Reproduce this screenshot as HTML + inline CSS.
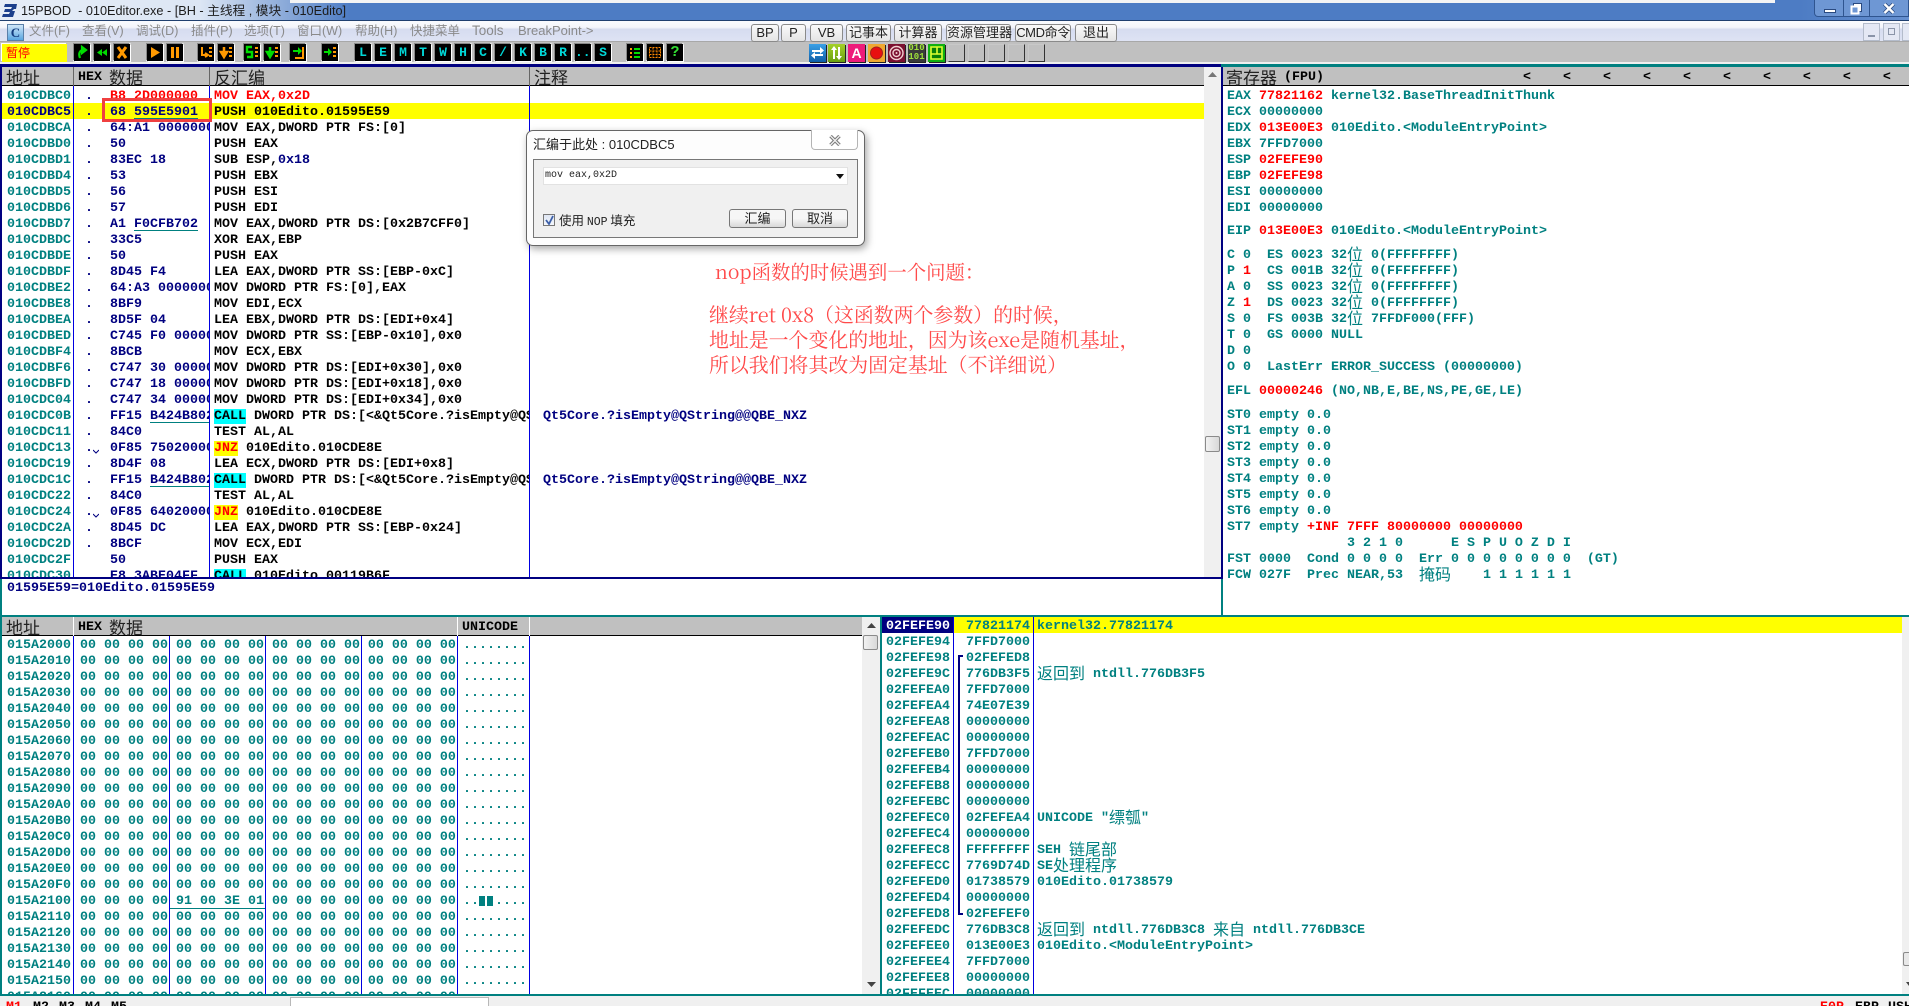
<!DOCTYPE html>
<html><head><meta charset="utf-8"><title>15PBOD</title>
<style>
html,body{margin:0;padding:0}
body{width:1909px;height:1006px;overflow:hidden;background:#f0f0f0;position:relative;font-family:"Liberation Sans","Noto Sans CJK SC",sans-serif}
.a{position:absolute}
.x{position:absolute;overflow:hidden}
pre{position:absolute;margin:0;font:bold 13.33px/16px "Liberation Mono","Noto Sans CJK SC",monospace;white-space:pre}
.t{color:#008080}.n{color:#000080}.k{color:#000}.r{color:#f00}
.c{display:inline-block;width:16px;height:16px;font:normal 16px/16px "Noto Sans CJK SC",sans-serif;text-align:center;vertical-align:top;position:relative;top:-3px}
.u{text-decoration:underline #008080;text-underline-offset:3px}
.call{background:#0ff}.jnz{background:#ff0;color:#f00}
.m{position:absolute;top:22px;font-size:12.5px;line-height:18px;color:#8a8a8a;white-space:nowrap}
.tb{position:absolute;top:24px;height:16px;box-sizing:content-box;border:1px solid #8a8a8a;border-radius:3px;background:linear-gradient(#fafafa,#e4e4e4);font-size:13px;line-height:16px;color:#222;text-align:center;white-space:nowrap}
.b{position:absolute;top:44px;width:16px;height:17px;background:#000;box-shadow:1px 1px 0 #fff,-1px -1px 0 #888,1px -1px 0 #ddd,-1px 1px 0 #ddd;overflow:hidden;color:#00d8d8;font:bold 13px/17px "Liberation Mono",monospace;text-align:center}
.b svg,.s svg{display:block}
.s{position:absolute;top:44px;width:17px;height:18px;box-shadow:1px 1px 0 #222;overflow:hidden}
.e{position:absolute;top:44px;width:17px;height:18px;border:1px solid #333;border-left-color:#c8c8c8;border-top-color:#c8c8c8;box-sizing:border-box}
.h{position:absolute;height:19px;background:#c0c0c0;border-bottom:1px solid #000;box-sizing:border-box}
.hd{position:absolute;font:normal 17px/19px "Noto Sans CJK SC",sans-serif;color:#222;white-space:nowrap}
.hm{position:absolute;font:bold 13.33px/19px "Liberation Mono",monospace;color:#000;white-space:nowrap}
.v{position:absolute;width:1px;background:#0000e0}
.red{position:absolute;font:normal 19.9px/24px "Noto Serif CJK SC",serif;color:#ff4a4a;white-space:nowrap}
</style></head><body>

<!-- title bar -->
<div class="a" style="left:0;top:0;width:1909px;height:21px;background:linear-gradient(90deg,#e6edf7 0,#dce6f4 200px,#4d7cc4 350px,#4d7cc4 1800px,#6690d0 1909px)"></div>
<div class="a" style="left:290px;top:0;width:1485px;height:3px;background:#f4f4f4"></div>
<svg class="a" style="left:1px;top:3px" width="17" height="15" viewBox="0 0 17 15"><path d="M4 1H16L15 6H13L11 8H14L12 14H1L2 11H8L9 9H3L4 6H10L11 4H3z" fill="#1c3f8c"/></svg>
<div class="a" style="left:21px;top:3px;font-size:12.7px;line-height:17px;color:#1c1c1c;white-space:nowrap">15PBOD &nbsp;- 010Editor.exe - [BH - 主线程 , 模块 - 010Edito]</div>
<div class="a" style="left:1814px;top:0;width:95px;height:17px;background:#6e97d4;border:1px solid #2f5590;border-top:0;border-radius:0 0 0 4px;box-sizing:border-box"></div>
<div class="a" style="left:1843px;top:0;width:1px;height:17px;background:#2f5590"></div>
<div class="a" style="left:1869px;top:0;width:1px;height:17px;background:#2f5590"></div>
<div class="a" style="left:1824px;top:9px;width:10px;height:2px;background:#fff;border:1px solid #2a4a80"></div>
<svg class="a" style="left:1850px;top:3px" width="13" height="12" viewBox="0 0 13 12"><rect x="3.5" y=".5" width="8" height="8" fill="#fff" stroke="#2a4a80"/><rect x="1.5" y="3.5" width="7" height="7" fill="#6e97d4" stroke="#fff" stroke-width="2"/></svg>
<svg class="a" style="left:1883px;top:3px" width="12" height="11" viewBox="0 0 12 11"><path d="M1.5 1L10.5 10M10.5 1L1.5 10" stroke="#2a4a80" stroke-width="4"/><path d="M1.5 1L10.5 10M10.5 1L1.5 10" stroke="#fff" stroke-width="2.4"/></svg>
<div class="a" style="left:0;top:20px;width:1909px;height:1px;background:#20406f"></div>

<!-- menu bar -->
<div class="a" style="left:0;top:21px;width:1909px;height:21px;background:linear-gradient(#fafbfe 0,#f4f6fb 30%,#d6dcf0 40%,#dfe4f4 100%)"></div>
<div class="a" style="left:0;top:41px;width:1909px;height:1px;background:#a8a8a8"></div>
<div class="a" style="left:7px;top:24px;width:15px;height:15px;background:linear-gradient(#cfe6f8,#5aa6e0);border:1px solid #5a7fa8;font:bold 13px/15px 'Liberation Serif',serif;color:#123a7c;text-align:center">C</div>
<div class="m" style="left:29px">文件(F)</div><div class="m" style="left:82px">查看(V)</div><div class="m" style="left:136px">调试(D)</div><div class="m" style="left:191px">插件(P)</div><div class="m" style="left:244px">选项(T)</div><div class="m" style="left:297px">窗口(W)</div><div class="m" style="left:355px">帮助(H)</div><div class="m" style="left:410px">快捷菜单</div><div class="m" style="left:472px;font-size:13.5px">Tools</div><div class="m" style="left:518px;font-size:13px">BreakPoint-&gt;</div>
<div class="tb" style="left:751px;width:26px">BP</div><div class="tb" style="left:781px;width:23px">P</div><div class="tb" style="left:810px;width:31px">VB</div><div class="tb" style="left:846px;width:43px">记事本</div><div class="tb" style="left:894px;width:46px">计算器</div><div class="tb" style="left:946px;width:63px">资源管理器</div><div class="tb" style="left:1015px;width:54px;letter-spacing:-.4px">CMD命令</div><div class="tb" style="left:1075px;width:40px">退出</div>
<div class="a" style="left:1863px;top:23px;width:17px;height:18px;border:1px solid #b4bccb;box-sizing:border-box;background:#e4e8f4"></div><div class="a" style="left:1868px;top:35px;width:7px;height:2px;background:#8a94a8"></div>
<div class="a" style="left:1883px;top:23px;width:17px;height:18px;border:1px solid #b4bccb;box-sizing:border-box;background:#e4e8f4"></div><div class="a" style="left:1888px;top:28px;width:7px;height:7px;border:1px solid #8a94a8;box-sizing:border-box"></div>
<div class="a" style="left:1902px;top:23px;width:7px;height:18px;border:1px solid #b4bccb;border-right:0;box-sizing:border-box;background:#e4e8f4"></div>

<!-- toolbar -->
<div class="a" style="left:0;top:42px;width:1909px;height:22px;background:#c0c0c0"></div>
<div class="a" style="left:0;top:62px;width:1909px;height:2px;background:#efefef"></div>
<div class="a" style="left:2px;top:44px;width:65px;height:18px;background:#ff0;font:12px/18px 'Noto Sans CJK SC',sans-serif;color:#f00;text-indent:4px;box-shadow:-1px -1px 0 #fff">暂停</div>

<div class="b" style="left:74px"><svg width="16" height="17" viewBox="0 0 16 17"><path d="M6 14C4 9 6 6 10 6M8 3L12 6L8 9z" fill="none" stroke="#0d0" stroke-width="2.2"/></svg></div>
<div class="b" style="left:94px"><svg width="16" height="17" viewBox="0 0 16 17"><path d="M8 5L3 8.5L8 12zM13 5L8 8.5L13 12z" fill="#0d0"/></svg></div>
<div class="b" style="left:114px"><svg width="16" height="17" viewBox="0 0 16 17"><path d="M4 3L12 14M12 3L4 14" stroke="#f90" stroke-width="3"/></svg></div>
<div class="b" style="left:147px"><svg width="16" height="17" viewBox="0 0 16 17"><path d="M4 3L13 8.5L4 14z" fill="#f90"/></svg></div>
<div class="b" style="left:167px"><svg width="16" height="17" viewBox="0 0 16 17"><path d="M4 3h3v11H4zM9 3h3v11H9z" fill="#f90"/></svg></div>
<div class="b" style="left:198px"><svg width="16" height="17" viewBox="0 0 16 17"><path d="M4 3v8h5M7 9L10 11L7 13" stroke="#f90" stroke-width="2" fill="none"/><path d="M11 3h3v2h-3zM11 7h3v2h-3zM11 11h3v2h-3z" fill="#f90"/></svg></div>
<div class="b" style="left:218px"><svg width="16" height="17" viewBox="0 0 16 17"><path d="M6 3v7M3 8L6 13L9 8z" stroke="#f90" stroke-width="2.5" fill="#f90"/><path d="M11 3h3v2h-3zM11 7h3v2h-3zM11 11h3v2h-3z" fill="#f90"/></svg></div>
<div class="b" style="left:244px"><svg width="16" height="17" viewBox="0 0 16 17"><path d="M8 3H3V8H8V13H3" stroke="#0d0" stroke-width="2.4" fill="none"/><path d="M11 3h3v2h-3zM11 7h3v2h-3zM11 11h3v2h-3z" fill="#f90"/></svg></div>
<div class="b" style="left:264px"><svg width="16" height="17" viewBox="0 0 16 17"><path d="M6 3v7M3 8L6 13L9 8z" stroke="#0d0" stroke-width="2.5" fill="#0d0"/><path d="M11 3h3v2h-3zM11 7h3v2h-3zM11 11h3v2h-3z" fill="#f90"/></svg></div>
<div class="b" style="left:290px"><svg width="16" height="17" viewBox="0 0 16 17"><path d="M3 6H8V3L12 7L8 11V8H3z" fill="#0d0"/><path d="M13 3V14H5" stroke="#f90" stroke-width="2" fill="none"/></svg></div>
<div class="b" style="left:322px"><svg width="16" height="17" viewBox="0 0 16 17"><path d="M2 7H6V4L10 8L6 12V9H2z" fill="#0d0"/><path d="M11 3h3v2h-3zM11 7h3v2h-3zM11 11h3v2h-3z" fill="#f90"/></svg></div>
<div class="b" style="left:355px">L</div><div class="b" style="left:375px">E</div><div class="b" style="left:395px">M</div><div class="b" style="left:415px">T</div><div class="b" style="left:435px">W</div><div class="b" style="left:455px">H</div><div class="b" style="left:475px">C</div><div class="b" style="left:495px">/</div><div class="b" style="left:515px">K</div><div class="b" style="left:535px">B</div><div class="b" style="left:555px">R</div><div class="b" style="left:575px">...</div><div class="b" style="left:595px">S</div>
<div class="b" style="left:627px"><svg width="16" height="17" viewBox="0 0 16 17"><path d="M3 4h2v2H3zM3 8h2v2H3zM3 12h2v2H3z" fill="#f90"/><path d="M7 4h6v2H7zM7 8h6v2H7zM7 12h6v2H7z" fill="#0d0"/></svg></div>
<div class="b" style="left:647px"><svg width="16" height="17" viewBox="0 0 16 17"><path d="M2.5 3.5h11v10h-11zM6 3.5v10M10 3.5v10M2.5 7h11M2.5 10.500h11" stroke="#f80" stroke-dasharray="2 1" fill="none"/></svg></div>
<div class="b" style="left:667px;color:#3d3;font-size:15px">?</div>

<div class="s" style="left:809px;background:linear-gradient(#3aa0e6,#0f5fa8)"><svg width="17" height="18" viewBox="0 0 17 18"><path d="M3 6H11V3L15 6.500L11 10V8H3zM14 10H6V8L2 11.500L6 15V12H14z" fill="#fff"/></svg></div>
<div class="s" style="left:828px;background:linear-gradient(#a4d028,#6aa010)"><svg width="17" height="18" viewBox="0 0 17 18"><path d="M5 15V6H3L6 2L9 6H7V15zM10 3V12H8L11 16L14 12H12V3z" fill="#fff"/></svg></div>
<div class="s" style="left:848px;background:#ee1b7a;color:#fff;font:bold 14px/18px 'Liberation Sans',sans-serif;text-align:center">A</div>
<div class="s" style="left:868px;background:#f0a830"><svg width="17" height="18" viewBox="0 0 17 18"><circle cx="8.500" cy="9" r="6" fill="#e81010" stroke="#a02020"/></svg></div>
<div class="s" style="left:888px;background:#7c1030"><svg width="17" height="18" viewBox="0 0 17 18"><circle cx="8.500" cy="9" r="6.500" fill="none" stroke="#f0d0d0" stroke-width="1.400"/><circle cx="8.500" cy="9" r="3.500" fill="none" stroke="#f0d0d0" stroke-width="1.400"/><circle cx="8.500" cy="9" r="1" fill="#f0d0d0"/></svg></div>
<div class="s" style="left:908px;background:#3a3a3a;color:#9ee03a;font:bold 9px/9px 'Liberation Mono',monospace;text-align:center">010<br>101</div>
<div class="s" style="left:928px;background:#10b010"><svg width="17" height="18" viewBox="0 0 17 18"><path d="M3 3h11v12H3zM9 3v7M3 10h11" stroke="#dfff30" stroke-width="1.600" fill="#088008"/></svg></div>
<div class="e" style="left:948px"></div><div class="e" style="left:968px"></div><div class="e" style="left:988px"></div><div class="e" style="left:1008px"></div><div class="e" style="left:1028px"></div>

<!-- client background -->
<div class="a" style="left:0;top:64px;width:1221px;height:3px;background:#000080"></div>
<div class="a" style="left:1221px;top:64px;width:688px;height:3px;background:#008080"></div>
<div class="a" style="left:0;top:67px;width:1909px;height:929px;background:#fff"></div>

<!-- CPU pane -->
<div class="a" style="left:2px;top:103px;width:1202px;height:16px;background:#ff0"></div>
<div class="h" style="left:0;top:67px;width:1204px"></div>
<div class="a" style="left:73px;top:67px;width:1px;height:19px;background:#666"></div>
<div class="a" style="left:209px;top:67px;width:1px;height:19px;background:#666"></div>
<div class="a" style="left:529px;top:67px;width:1px;height:19px;background:#666"></div>
<div class="hd" style="left:6px;top:67px">地址</div>
<div class="hm" style="left:78px;top:68px">HEX</div><div class="hd" style="left:109px;top:67px">数据</div>
<div class="hd" style="left:214px;top:67px">反汇编</div>
<div class="hd" style="left:534px;top:67px">注释</div>
<div class="v" style="left:73px;top:86px;height:491px"></div>
<div class="v" style="left:209px;top:86px;height:491px"></div>
<div class="v" style="left:529px;top:86px;height:491px"></div>

<div class="x" style="left:7px;top:87px;width:66px;height:490px"><pre class="t" style="left:0;top:2px">010CDBC0
<span class="n">010CDBC5</span>
010CDBCA
010CDBD0
010CDBD1
010CDBD4
010CDBD5
010CDBD6
010CDBD7
010CDBDC
010CDBDE
010CDBDF
010CDBE2
010CDBE8
010CDBEA
010CDBED
010CDBF4
010CDBF6
010CDBFD
010CDC04
010CDC0B
010CDC11
010CDC13
010CDC19
010CDC1C
010CDC22
010CDC24
010CDC2A
010CDC2D
010CDC2F
010CDC30</pre></div>
<pre class="n" style="left:85px;top:89px">
.
.
.
.
.
.
.
.
.
.
.
.
.
.
.
.
.
.
.
.
.
.
.
.
.
.
.
.
.</pre>
<svg class="a" style="left:93px;top:449px" width="6" height="5"><path d="M0 1L3 4L6 1" stroke="#000080" fill="none"/></svg>
<svg class="a" style="left:93px;top:513px" width="6" height="5"><path d="M0 1L3 4L6 1" stroke="#000080" fill="none"/></svg>
<div class="x" style="left:110px;top:87px;width:99px;height:490px"><pre class="n" style="left:0;top:2px"><span class="r">B8 2D000000</span>
68 <span class="u">595E5901</span>
64:A1 00000000
50
83EC 18
53
56
57
A1 <span class="u">F0CFB702</span>
33C5
50
8D45 F4
64:A3 00000000
8BF9
8D5F 04
C745 F0 00000000
8BCB
C747 30 00000000
C747 18 00000000
C747 34 00000000
FF15 <span class="u">B424B802</span>
84C0
0F85 75020000
8D4F 08
FF15 <span class="u">B424B802</span>
84C0
0F85 64020000
8D45 DC
8BCF
50
E8 3ABE04FF</pre></div>
<div class="x" style="left:214px;top:87px;width:315px;height:490px"><pre class="k" style="left:0;top:2px"><span class="r">MOV EAX,0x2D</span>
PUSH 010Edito.01595E59
MOV EAX,DWORD PTR FS:[0]
PUSH EAX
SUB ESP,<span class="n">0x18</span>
PUSH EBX
PUSH ESI
PUSH EDI
MOV EAX,DWORD PTR DS:[0x2B7CFF0]
XOR EAX,EBP
PUSH EAX
LEA EAX,DWORD PTR SS:[EBP-0xC]
MOV DWORD PTR FS:[0],EAX
MOV EDI,ECX
LEA EBX,DWORD PTR DS:[EDI+0x4]
MOV DWORD PTR SS:[EBP-0x10],0x0
MOV ECX,EBX
MOV DWORD PTR DS:[EDI+0x30],0x0
MOV DWORD PTR DS:[EDI+0x18],0x0
MOV DWORD PTR DS:[EDI+0x34],0x0
<span class="call">CALL</span> DWORD PTR DS:[&lt;&amp;Qt5Core.?isEmpty@QString@@QBE_NXZ&gt;]
TEST AL,AL
<span class="jnz">JNZ</span> 010Edito.010CDE8E
LEA ECX,DWORD PTR DS:[EDI+0x8]
<span class="call">CALL</span> DWORD PTR DS:[&lt;&amp;Qt5Core.?isEmpty@QString@@QBE_NXZ&gt;]
TEST AL,AL
<span class="jnz">JNZ</span> 010Edito.010CDE8E
LEA EAX,DWORD PTR SS:[EBP-0x24]
MOV ECX,EDI
PUSH EAX
<span class="call">CALL</span> 010Edito.00119B6F</pre></div>
<pre class="n" style="left:543px;top:409px">Qt5Core.?isEmpty@QString@@QBE_NXZ</pre>
<pre class="n" style="left:543px;top:473px">Qt5Core.?isEmpty@QString@@QBE_NXZ</pre>

<!-- red box -->
<div class="a" style="left:102px;top:98px;width:110px;height:24px;border:3px solid #f04040;box-sizing:border-box"></div>

<!-- CPU scrollbar -->
<div class="a" style="left:1204px;top:67px;width:17px;height:510px;background:#f0f0f0"></div>
<svg class="a" style="left:1208px;top:72px" width="9" height="6"><path d="M4.500 0L9 5H0z" fill="#777"/></svg>
<div class="a" style="left:1205px;top:436px;width:15px;height:16px;background:linear-gradient(90deg,#f2f2f2,#d8d8d8);border:1px solid #8a8a8a;border-radius:2px;box-sizing:border-box"></div>

<!-- separators -->
<div class="a" style="left:0;top:67px;width:2px;height:512px;background:#000080"></div>
<div class="a" style="left:0;top:577px;width:1221px;height:2px;background:#000080"></div>
<div class="a" style="left:0;top:579px;width:2px;height:417px;background:#008080"></div>
<div class="a" style="left:1221px;top:67px;width:2px;height:512px;background:#000080"></div>
<div class="a" style="left:1221px;top:579px;width:2px;height:36px;background:#008080"></div>
<div class="a" style="left:0;top:615px;width:1909px;height:2px;background:#008080"></div>

<!-- info line -->
<pre class="n" style="left:7px;top:581px">01595E59=010Edito.01595E59</pre>

<!-- register pane -->
<div class="h" style="left:1223px;top:67px;width:686px"></div>
<div class="hd" style="left:1226px;top:67px">寄存器</div>
<div class="hm" style="left:1284px;top:68px">(FPU)</div>
<pre class="k" style="left:1523px;top:68px;line-height:19px;letter-spacing:0">&lt;    &lt;    &lt;    &lt;    &lt;    &lt;    &lt;    &lt;    &lt;    &lt;</pre>
<pre class="t" style="left:1227px;top:89px">EAX <span class="r">77821162</span> kernel32.BaseThreadInitThunk
ECX 00000000
EDX <span class="r">013E00E3</span> 010Edito.&lt;ModuleEntryPoint&gt;
EBX 7FFD7000
ESP <span class="r">02FEFE90</span>
EBP <span class="r">02FEFE98</span>
ESI 00000000
EDI 00000000</pre>
<pre class="t" style="left:1227px;top:224px">EIP <span class="r">013E00E3</span> 010Edito.&lt;ModuleEntryPoint&gt;</pre>
<pre class="t" style="left:1227px;top:248px">C 0  ES 0023 32<span class="c">位</span> 0(FFFFFFFF)
P <span class="r">1</span>  CS 001B 32<span class="c">位</span> 0(FFFFFFFF)
A 0  SS 0023 32<span class="c">位</span> 0(FFFFFFFF)
Z <span class="r">1</span>  DS 0023 32<span class="c">位</span> 0(FFFFFFFF)
S 0  FS 003B 32<span class="c">位</span> 7FFDF000(FFF)
T 0  GS 0000 NULL
D 0
O 0  LastErr ERROR_SUCCESS (00000000)</pre>
<pre class="t" style="left:1227px;top:384px">EFL <span class="r">00000246</span> (NO,NB,E,BE,NS,PE,GE,LE)</pre>
<pre class="t" style="left:1227px;top:408px">ST0 empty 0.0
ST1 empty 0.0
ST2 empty 0.0
ST3 empty 0.0
ST4 empty 0.0
ST5 empty 0.0
ST6 empty 0.0
ST7 empty <span class="r">+INF 7FFF 80000000 00000000</span>
               3 2 1 0      E S P U O Z D I
FST 0000  Cond 0 0 0 0  Err 0 0 0 0 0 0 0 0  (GT)
FCW 027F  Prec NEAR,53  <span class="c">掩</span><span class="c">码</span>    1 1 1 1 1 1</pre>

<!-- dump pane -->
<div class="h" style="left:2px;top:617px;width:71px"></div>
<div class="h" style="left:74px;top:617px;width:383px"></div>
<div class="h" style="left:458px;top:617px;width:71px"></div>
<div class="h" style="left:530px;top:617px;width:332px"></div>
<div class="hd" style="left:6px;top:617px">地址</div>
<div class="hm" style="left:78px;top:618px">HEX</div><div class="hd" style="left:109px;top:617px">数据</div>
<div class="hm" style="left:462px;top:618px">UNICODE</div>
<div class="v" style="left:73px;top:636px;height:358px"></div>
<div class="v" style="left:169px;top:636px;height:358px"></div>
<div class="v" style="left:265px;top:636px;height:358px"></div>
<div class="v" style="left:361px;top:636px;height:358px"></div>
<div class="v" style="left:457px;top:636px;height:358px"></div>
<div class="v" style="left:529px;top:636px;height:358px"></div>
<div class="x" style="left:7px;top:637px;width:520px;height:357px"><pre class="t" style="left:0;top:1px">015A2000
015A2010
015A2020
015A2030
015A2040
015A2050
015A2060
015A2070
015A2080
015A2090
015A20A0
015A20B0
015A20C0
015A20D0
015A20E0
015A20F0
015A2100
015A2110
015A2120
015A2130
015A2140
015A2150
015A2160</pre><pre class="t" style="left:73px;top:1px">00 00 00 00 00 00 00 00 00 00 00 00 00 00 00 00
00 00 00 00 00 00 00 00 00 00 00 00 00 00 00 00
00 00 00 00 00 00 00 00 00 00 00 00 00 00 00 00
00 00 00 00 00 00 00 00 00 00 00 00 00 00 00 00
00 00 00 00 00 00 00 00 00 00 00 00 00 00 00 00
00 00 00 00 00 00 00 00 00 00 00 00 00 00 00 00
00 00 00 00 00 00 00 00 00 00 00 00 00 00 00 00
00 00 00 00 00 00 00 00 00 00 00 00 00 00 00 00
00 00 00 00 00 00 00 00 00 00 00 00 00 00 00 00
00 00 00 00 00 00 00 00 00 00 00 00 00 00 00 00
00 00 00 00 00 00 00 00 00 00 00 00 00 00 00 00
00 00 00 00 00 00 00 00 00 00 00 00 00 00 00 00
00 00 00 00 00 00 00 00 00 00 00 00 00 00 00 00
00 00 00 00 00 00 00 00 00 00 00 00 00 00 00 00
00 00 00 00 00 00 00 00 00 00 00 00 00 00 00 00
00 00 00 00 00 00 00 00 00 00 00 00 00 00 00 00
00 00 00 00 91 00 3E 01 00 00 00 00 00 00 00 00
00 00 00 00 00 00 00 00 00 00 00 00 00 00 00 00
00 00 00 00 00 00 00 00 00 00 00 00 00 00 00 00
00 00 00 00 00 00 00 00 00 00 00 00 00 00 00 00
00 00 00 00 00 00 00 00 00 00 00 00 00 00 00 00
00 00 00 00 00 00 00 00 00 00 00 00 00 00 00 00
00 00 00 00 00 00 00 00 00 00 00 00 00 00 00 00</pre><pre class="t" style="left:456px;top:1px">........
........
........
........
........
........
........
........
........
........
........
........
........
........
........
........
..  ....
........
........
........
........
........
........</pre></div>
<div class="a" style="left:479px;top:896px;width:6px;height:10px;background:#008080"></div>
<div class="a" style="left:487px;top:896px;width:6px;height:10px;background:#008080"></div>
<div class="a" style="left:170px;top:908px;width:95px;height:1px;background:#008080"></div>

<!-- dump scrollbar -->
<div class="a" style="left:862px;top:617px;width:18px;height:377px;background:#f0f0f0"></div>
<svg class="a" style="left:867px;top:623px" width="9" height="6"><path d="M4.500 0L9 5H0z" fill="#444"/></svg>
<svg class="a" style="left:867px;top:982px" width="9" height="6"><path d="M4.500 5L9 0H0z" fill="#444"/></svg>
<div class="a" style="left:863px;top:635px;width:15px;height:15px;background:linear-gradient(90deg,#f2f2f2,#d8d8d8);border:1px solid #8a8a8a;border-radius:2px;box-sizing:border-box"></div>
<div class="a" style="left:880px;top:617px;width:2px;height:377px;background:#008080"></div>

<!-- stack pane -->
<div class="a" style="left:882px;top:617px;width:71px;height:16px;background:#000080"></div>
<div class="a" style="left:954px;top:617px;width:955px;height:16px;background:#ff0"></div>
<div class="v" style="left:953px;top:617px;height:377px"></div>
<div class="v" style="left:1033px;top:617px;height:377px"></div>
<div class="x" style="left:886px;top:617px;width:66px;height:377px"><pre class="t" style="left:0;top:2px"><span style="color:#fff">02FEFE90</span>
02FEFE94
02FEFE98
02FEFE9C
02FEFEA0
02FEFEA4
02FEFEA8
02FEFEAC
02FEFEB0
02FEFEB4
02FEFEB8
02FEFEBC
02FEFEC0
02FEFEC4
02FEFEC8
02FEFECC
02FEFED0
02FEFED4
02FEFED8
02FEFEDC
02FEFEE0
02FEFEE4
02FEFEE8
02FEFEEC</pre></div>
<div class="x" style="left:966px;top:617px;width:67px;height:377px"><pre class="t" style="left:0;top:2px">77821174
7FFD7000
02FEFED8
776DB3F5
7FFD7000
74E07E39
00000000
00000000
7FFD7000
00000000
00000000
00000000
02FEFEA4
00000000
FFFFFFFF
7769D74D
01738579
00000000
02FEFEF0
776DB3C8
013E00E3
7FFD7000
00000000
00000000</pre></div>
<svg class="a" style="left:957px;top:655px" width="8" height="262"><path d="M6 1H2V259H6" stroke="#000080" stroke-width="2" fill="none"/></svg>
<pre class="t" style="left:1037px;top:619px">kernel32.77821174</pre>
<pre class="t" style="left:1037px;top:667px"><span class="c">返</span><span class="c">回</span><span class="c">到</span> ntdll.776DB3F5</pre>
<pre class="t" style="left:1037px;top:811px">UNICODE "<span class="c">缥</span><span class="c">瓠</span>"</pre>
<pre class="t" style="left:1037px;top:843px">SEH <span class="c">链</span><span class="c">尾</span><span class="c">部</span>
SE<span class="c">处</span><span class="c">理</span><span class="c">程</span><span class="c">序</span>
010Edito.01738579</pre>
<pre class="t" style="left:1037px;top:923px"><span class="c">返</span><span class="c">回</span><span class="c">到</span> ntdll.776DB3C8 <span class="c">来</span><span class="c">自</span> ntdll.776DB3CE
010Edito.&lt;ModuleEntryPoint&gt;</pre>

<!-- stack scrollbar -->
<div class="a" style="left:1902px;top:617px;width:7px;height:377px;background:#f0f0f0"></div>
<div class="a" style="left:1903px;top:952px;width:6px;height:14px;background:#e8e8e8;border:1px solid #8a8a8a;border-right:0;border-radius:2px 0 0 2px;box-sizing:border-box"></div>
<svg class="a" style="left:1906px;top:982px" width="3" height="6"><path d="M0 0H3V4z" fill="#444"/></svg>

<!-- bottom bar -->
<div class="a" style="left:0;top:994px;width:1909px;height:2px;background:#008080"></div>
<div class="a" style="left:0;top:996px;width:1909px;height:10px;background:#f0f0f0"></div>
<div class="a" style="left:290px;top:997px;width:199px;height:9px;background:#fff;border:1px solid #b8b8b8;border-bottom:0;box-sizing:border-box"></div>
<div class="x" style="left:0;top:996px;width:1909px;height:10px">
<pre class="k" style="left:6px;top:4px"><span class="r">M1</span> </pre>
<pre class="k" style="left:33px;top:4px">M2</pre><pre class="k" style="left:59px;top:4px">M3</pre><pre class="k" style="left:85px;top:4px">M4</pre><pre class="k" style="left:111px;top:4px">M5</pre>
<pre class="r" style="left:1820px;top:4px">E0P</pre><pre class="k" style="left:1855px;top:4px">EBP</pre><pre class="k" style="left:1888px;top:4px">USH</pre>
</div>

<!-- assemble dialog -->
<div class="a" style="left:526px;top:130px;width:339px;height:116px;background:#fdfdfd;border:1px solid #666;border-radius:7px;box-sizing:border-box;box-shadow:2px 3px 8px rgba(0,0,0,.35)"></div>
<div class="a" style="left:811px;top:130px;width:47px;height:20px;background:#fff;border:1px solid #b4b4b4;border-top:0;border-radius:0 0 4px 4px;box-sizing:border-box"></div>
<svg class="a" style="left:829px;top:135px" width="12" height="11" viewBox="0 0 12 11"><path d="M1.500 1L10.500 10M10.500 1L1.500 10" stroke="#777" stroke-width="3.400"/><path d="M1.500 1L10.500 10M10.500 1L1.500 10" stroke="#eee" stroke-width="1.400"/></svg>
<div class="a" style="left:533px;top:136px;font-size:13px;line-height:18px;color:#222;white-space:nowrap">汇编于此处 : 010CDBC5</div>
<div class="a" style="left:533px;top:159px;width:325px;height:79px;background:#f0f0f0;border:1px solid #777;box-sizing:border-box"></div>
<div class="a" style="left:543px;top:167px;width:305px;height:18px;background:#fff;border:1px solid #e2e2e2;box-sizing:border-box"></div>
<div class="a" style="left:545px;top:167px;font:10px/18px 'Liberation Mono',monospace;color:#222;white-space:nowrap">mov eax,0x2D</div>
<svg class="a" style="left:836px;top:174px" width="8" height="5"><path d="M0 0H8L4 5z" fill="#111"/></svg>
<div class="a" style="left:543px;top:214px;width:12px;height:12px;background:linear-gradient(#dfe6f3,#f4f7fc);border:1px solid #777;box-sizing:border-box"></div>
<svg class="a" style="left:545px;top:215px" width="9" height="10"><path d="M1 5L4 9L8 1" stroke="#3c5fa8" stroke-width="1.800" fill="none"/></svg>
<div class="a" style="left:559px;top:211px;font:normal 12.500px/18px 'Noto Sans CJK SC',sans-serif;color:#222;white-space:nowrap">使用 <span style="font:11.500px 'Liberation Mono',monospace">NOP</span> 填充</div>
<div class="a" style="left:729px;top:209px;width:57px;height:19px;background:linear-gradient(#f6f6f6 50%,#d8d8d8);border:1px solid #777;border-radius:3px;box-sizing:border-box;font-size:13px;line-height:17px;text-align:center;color:#222">汇编</div>
<div class="a" style="left:792px;top:209px;width:56px;height:19px;background:linear-gradient(#f6f6f6 50%,#d8d8d8);border:1px solid #777;border-radius:3px;box-sizing:border-box;font-size:13px;line-height:17px;text-align:center;color:#222">取消</div>

<!-- red annotations -->
<div class="red" style="left:715px;top:259px;font-size:19.4px">nop函数的时候遇到一个问题：</div>
<div class="red" style="left:709px;top:302px">继续ret 0x8（这函数两个参数）的时候，</div>
<div class="red" style="left:709px;top:327px">地址是一个变化的地址，因为该exe是随机基址，</div>
<div class="red" style="left:709px;top:352px">所以我们将其改为固定基址（不详细说）</div>

</body></html>
